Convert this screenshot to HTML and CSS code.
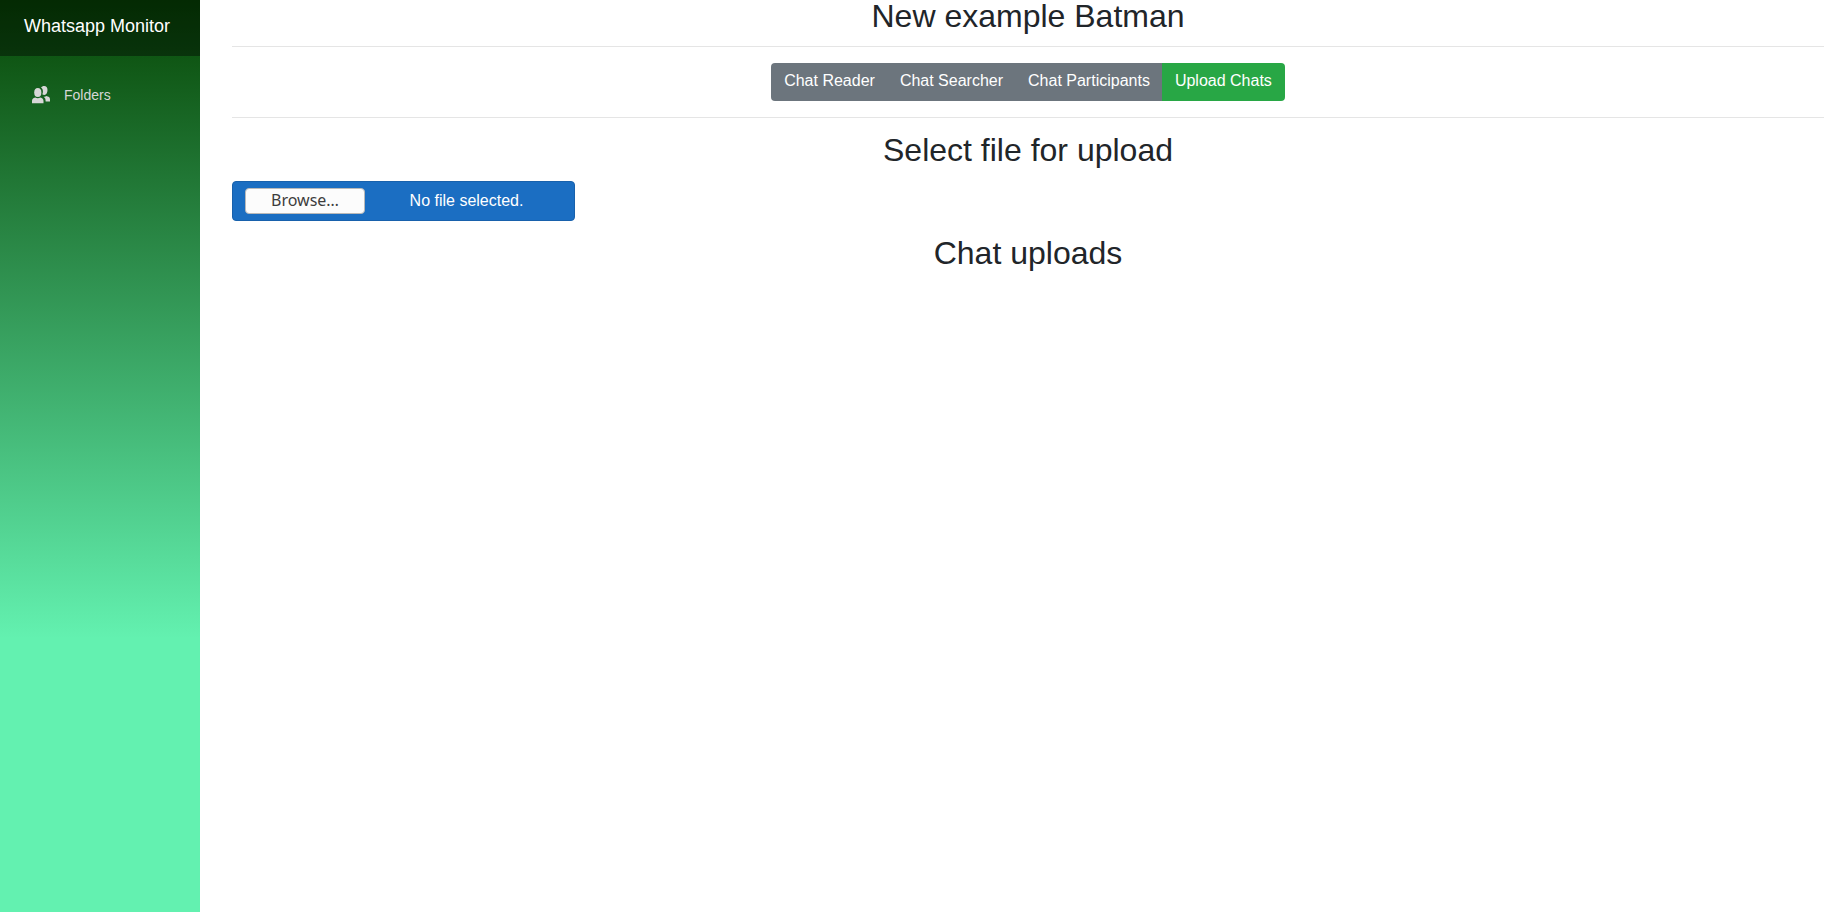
FILE: index.html
```html
<!DOCTYPE html>
<html lang="en">
<head>
<meta charset="utf-8">
<title>Whatsapp Monitor</title>
<meta name="viewport" content="width=device-width, initial-scale=1">
<link rel="stylesheet" href="styles.css">
</head>
<body>
<div class="page">
  <aside class="sidebar">
    <header class="sidebar-top"><a class="brand" href="#">Whatsapp Monitor</a></header>
    <nav class="sidebar-nav" aria-label="Main">
      <a class="nav-link" href="#">
        <svg class="nav-icon" viewBox="0 0 18 18" aria-hidden="true">
          <path d="M9 1.6C9.600 .5 10.900 0 12.200 0c2 0 3.300 1.500 3.300 4s-1.200 4.900-3.100 5.100c-.9 0-1.600-.3-2.100-.8.4-1 .6-1.900.6-2.900C10.900 3.700 10.200 2.400 9 1.600z"/>
          <path d="M11.600 10.800c.9.1 1.700-.1 2.500-.8 2.700.4 3.900 1.400 3.900 3.500v2h-4.400c0-2.500-.3-3.500-2-4.700z"/>
          <ellipse cx="5.800" cy="6.500" rx="3.600" ry="4.500"/>
          <path d="M0 17.200v-2.100c0-2.300 1-3.300 3.200-3.700 1.400 1 3.700 1 5.100 0 2.200.4 3.200 1.400 3.200 3.700v2.100z"/>
        </svg>
        <span>Folders</span>
      </a>
    </nav>
  </aside>
  <main class="content">
    <h1 class="heading">New example Batman</h1>
    <hr class="rule">
    <nav class="tabs" aria-label="Chat tools">
      <div class="button-group">
        <button class="btn" type="button">Chat Reader</button>
        <button class="btn" type="button">Chat Searcher</button>
        <button class="btn" type="button">Chat Participants</button>
        <button class="btn btn-active" type="button">Upload Chats</button>
      </div>
    </nav>
    <hr class="rule">
    <h2 class="heading">Select file for upload</h2>
    <label class="file-picker">
      <input class="file-input" type="file" aria-label="Select file for upload">
      <span class="file-browse">Browse…</span>
      <span class="file-status">No file selected.</span>
    </label>
    <h2 class="heading">Chat uploads</h2>
  </main>
</div>
</body>
</html>
```
FILE: styles.css
```css
* {
  box-sizing: border-box;
}

body {
  margin: 0;
  background: #fff;
  color: #212529;
  font: 16px/24px "Liberation Sans", Arial, sans-serif;
}

.page {
  display: flex;
  min-height: 100vh;
}

.sidebar {
  flex: 0 0 200px;
  background: linear-gradient(180deg, #074705 0%, #63f1b0 70%);
}

.sidebar-top {
  display: flex;
  align-items: center;
  height: 56px;
  padding: 0 24px 4px;
  background: rgba(0, 0, 0, 0.4);
}

.brand {
  color: #fff;
  font-size: 18px;
  text-decoration: none;
  white-space: nowrap;
}

.sidebar-nav {
  padding: 16px;
}

.nav-link {
  display: flex;
  align-items: center;
  gap: 14px;
  height: 46px;
  padding: 0 16px;
  color: #d7d7d7;
  font-size: 14px;
  text-decoration: none;
}

.nav-icon {
  width: 18px;
  height: 18px;
  fill: currentColor;
}

.content {
  flex: 1;
  min-width: 0;
  padding: 0 24px 0 32px;
}

.heading {
  margin: 0 0 14px;
  font-size: 32px;
  font-weight: 400;
  line-height: 32px;
  text-align: center;
}

.rule {
  margin: 0 0 16px;
  border: 0;
  border-top: 1px solid #e5e5e5;
}

.tabs {
  display: flex;
  justify-content: center;
  margin-bottom: 16px;
}

.button-group {
  display: flex;
  overflow: hidden;
  border-radius: 4px;
}

.btn {
  height: 38px;
  padding: 4px 13px 6px;
  border: 0;
  background: #6c757d;
  color: #fff;
  font: inherit;
}

.btn + .btn {
  margin-left: -1px;
}

.btn-active {
  background: #28a745;
}

.file-picker {
  position: relative;
  display: flex;
  align-items: center;
  width: 343px;
  height: 40px;
  margin: 15px 0 16px;
  padding: 0 12px;
  border: 1px solid #1861ac;
  border-radius: 4px;
  background: #1b6ec2;
  color: #fff;
}

.file-input {
  position: absolute;
  inset: 0;
  width: 100%;
  opacity: 0;
  cursor: pointer;
}

.file-browse {
  width: 120px;
  height: 26px;
  border: 1px solid #b9b9b9;
  border-radius: 4px;
  background: #fcfcfc;
  color: #3d3d3d;
  font-family: "Noto Sans", sans-serif;
  line-height: 23px;
  text-align: center;
}

.file-status {
  flex: 1;
  padding-left: 6px;
  text-align: center;
}
```
